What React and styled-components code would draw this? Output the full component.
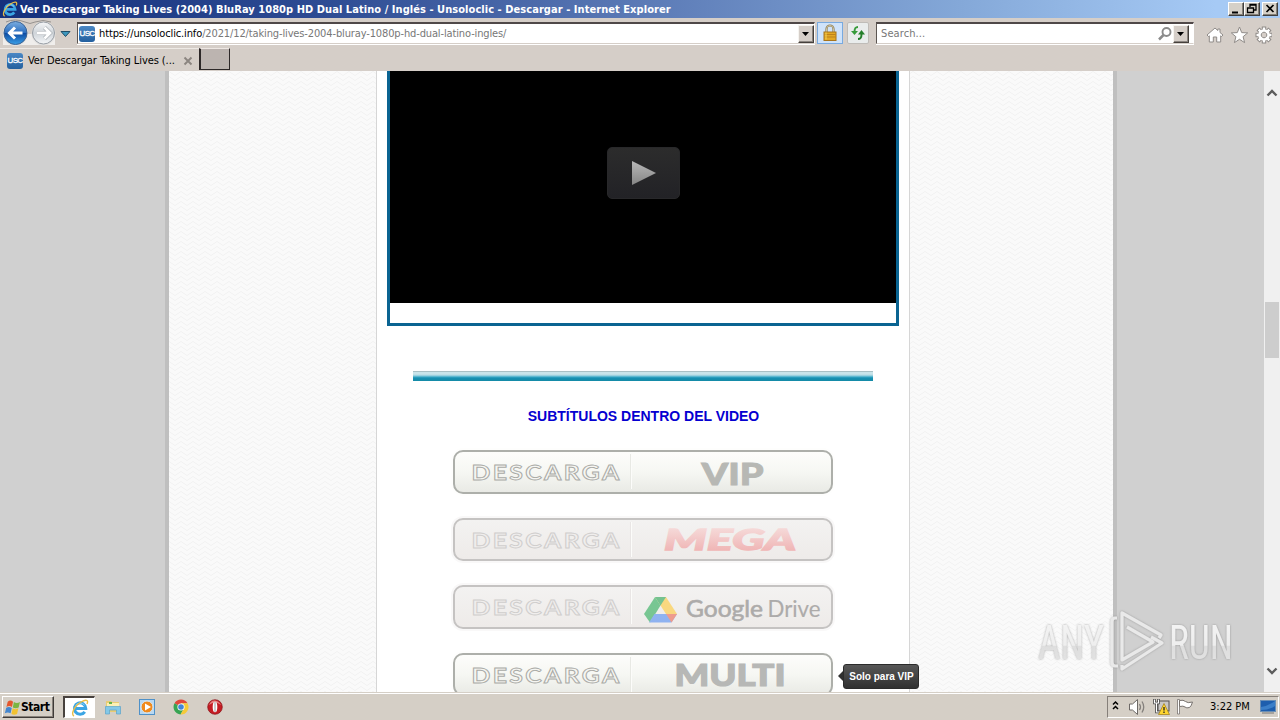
import React from "react";
import styled, { createGlobalStyle } from "styled-components";

const Global = createGlobalStyle`
  * { box-sizing: border-box; }
  body { margin: 0; overflow: hidden; }
`;

const ui = `"DejaVu Sans Condensed", "DejaVu Sans", sans-serif`;

const Screen = styled.div`
  position: relative;
  width: 1280px;
  height: 720px;
  display: flex;
  flex-direction: column;
  overflow: hidden;
  background: #d5cec8;
  font-family: ${ui};
  font-stretch: condensed;
  font-size: 11px;
  color: #000;
`;

const Text = styled.span`
  white-space: pre;
  line-height: 14px;
  font-weight: ${(p) => (p.$bold ? 700 : 400)};
  font-size: ${(p) => p.$size || 11}px;
  letter-spacing: ${(p) => p.$track || 0}px;
  color: ${(p) => p.$color || "inherit"};
`;

/* Title bar */
const TitleBar = styled.header`
  display: flex;
  align-items: center;
  height: 18px;
  flex: none;
  padding: 0 2px;
  gap: 2px;
  background: linear-gradient(90deg, #15307c 0%, #2d4b93 25%, #5b7ab6 50%, #84a8d8 75%, #a6caf5 95%);
`;
const TitleText = styled(Text)`
  flex: 1;
  padding-top: 1px;
`;
const Captions = styled.div`
  display: flex;
`;
const CaptionButton = styled.button`
  display: flex;
  width: 16px;
  height: 14px;
  padding: 0;
  margin-left: ${(p) => p.$gap || 0}px;
  background: #d5d0c8;
  border: 1px solid;
  border-color: #fff #404040 #404040 #fff;
  box-shadow: inset -1px -1px #858078;
`;

/* Navigation row */
const NavRow = styled.div`
  display: flex;
  align-items: center;
  height: 30px;
  flex: none;
  padding-left: 2px;
`;
const HistoryButtons = styled.div`
  display: flex;
  width: 75px;
  height: 30px;
`;
const Field = styled.div`
  display: flex;
  align-items: center;
  width: ${(p) => p.$w}px;
  height: 22px;
  margin-right: ${(p) => p.$gap}px;
  padding: 0 0 0 ${(p) => p.$pad}px;
  background: #fff;
  border-style: solid;
  border-width: 2px 1px 1px 1px;
  border-color: #4f4848 #fff #d5cec8 #5c5652;
  box-shadow: 0 1px #fff;
`;
const Address = styled(Text)`
  margin-left: 4px;
`;
const Favicon = styled.span`
  display: flex;
  align-items: center;
  justify-content: center;
  flex: none;
  width: 16px;
  height: 16px;
  border-radius: 3px;
  background: linear-gradient(#4a87c4, #24609f);
  color: #fff;
  font: 400 8px/16px "Liberation Sans", sans-serif;
  letter-spacing: -0.7px;
  -webkit-text-stroke: 0.3px #fff;
`;
const Grow = styled.div`
  flex: 1;
`;
const DropButton = styled.button`
  display: flex;
  align-items: center;
  justify-content: center;
  width: 16px;
  height: 18px;
  padding: 0;
  margin-right: ${(p) => p.$right || 0}px;
  background: #d5cec8;
  border: 1px solid;
  border-color: #f6f4f0 #45403c #45403c #f6f4f0;
  box-shadow: inset -1px -1px #8b8580;
`;
const ToolButton = styled.button`
  display: flex;
  align-items: center;
  justify-content: center;
  width: ${(p) => p.$w}px;
  height: 22px;
  padding: 0;
  margin-right: ${(p) => p.$gap}px;
  background: ${(p) => (p.$active ? "#cfe3fa" : "#e9ecec")};
  border: 1px solid ${(p) => (p.$active ? "#78aae0" : "#bfbcb8")};
  border-radius: ${(p) => (p.$active ? 0 : 2)}px;
`;
const IconGroup = styled.div`
  display: flex;
  gap: 6px;
  padding-top: 3px;
`;

/* Tabs */
const TabRow = styled.nav`
  display: flex;
  height: 23px;
  flex: none;
`;
const Tab = styled.div`
  display: flex;
  align-items: center;
  width: 199px;
  height: 23px;
  padding: 1px 0 0 7px;
  gap: 5px;
  border-top: 1px solid #eeeae6;
`;
const TabLabel = styled(Text)`
  width: 150px;
`;
const NewTab = styled.div`
  width: 31px;
  height: 22px;
  background: #bcb4b0;
  border: solid #2d2828;
  border-width: 1px 1px 1px 2px;
  border-top-color: #eee8e4;
`;

/* Page */
const Viewport = styled.main`
  display: flex;
  flex: 1;
  min-height: 0;
  overflow: hidden;
  background: #d0d0d0;
`;
const Canvas = styled.div`
  width: 1264px;
  display: flex;
  padding-left: 165px;
`;
const zig = encodeURIComponent(
  `<svg xmlns="http://www.w3.org/2000/svg" width="12" height="5"><path d="M0 .5L6 4.500L12 .5" fill="none" stroke="#f2f2f2" stroke-width="1"/></svg>`
);
const Sheet = styled.div`
  display: flex;
  width: 952px;
  padding-left: 207px;
  border: solid #bfbfbf;
  border-width: 0 4px;
  background: #fafafa url("data:image/svg+xml,${zig}");
`;
const Article = styled.article`
  width: 534px;
  height: 621px;
  display: flex;
  flex-direction: column;
  align-items: center;
  background: #fff;
  border: solid #d6d6d6;
  border-width: 0 1px;
`;
const Player = styled.section`
  width: 512px;
  height: 255px;
  flex: none;
  border: solid #0a6492;
  border-width: 0 3px 3px;
`;
const VideoStage = styled.div`
  display: flex;
  justify-content: center;
  height: 232px;
  padding: 76px 0 0 1px;
  background: #000;
`;
const PlayButton = styled.button`
  width: 73px;
  height: 52px;
  padding: 0;
  border: 1px solid #28282a;
  border-radius: 5px;
  background: linear-gradient(#2c2c2c, #222226);
`;
const Divider = styled.div`
  width: 460px;
  height: 10px;
  flex: none;
  margin-top: 45px;
  background: linear-gradient(#a9c0c5 0 1px, #c9e4ea 1px 3px, #b4dbe4 4px, #7fc6da 5px, #3aa9c6 6px, #1890b2 7px, #148aa6 10px);
`;
const Heading = styled.h2`
  margin: 26px 0 25px;
  padding-left: 1px;
  font: 700 14px/18px "Liberation Sans", Arial, sans-serif;
  color: #0500d0;
  white-space: nowrap;
`;
const Downloads = styled.div`
  display: flex;
  flex-direction: column;
  gap: 24px;
`;
const DownloadRow = styled.div`
  position: relative;
  height: 43.5px;
`;
const DownloadButton = styled.a`
  display: flex;
  width: 380px;
  height: 43.5px;
  border: 2px solid ${(p) => (p.$dim ? "#c5c3c2" : "#adafaa")};
  border-radius: 10px;
  background: ${(p) =>
    p.$dim ? "linear-gradient(#f3f2f1, #eeebe9)" : "linear-gradient(#fdfdfb, #f6f7f3 50%, #e9eae5)"};
  box-shadow: 0 0 0 2px ${(p) => (p.$dim ? "#f9f8f8" : "#fefefd")};
`;
const Tip = styled.div`
  position: absolute;
  left: 390px;
  top: 11px;
  width: 76px;
  height: 25px;
  padding-left: 1px;
  border-radius: 3px;
  background: linear-gradient(#575757, #303030);
  border: 1px solid #2b2b2b;
  color: #fff;
  font: 700 10px/23px "Liberation Sans", Arial, sans-serif;
  text-align: center;
  white-space: nowrap;
  &::before {
    content: "";
    position: absolute;
    left: -6px;
    top: 6px;
    border: solid transparent;
    border-width: 5px 5px 5px 0;
    border-right-color: #303030;
  }
`;
const ScrollBar = styled.aside`
  display: flex;
  flex-direction: column;
  align-items: center;
  justify-content: space-between;
  width: 16px;
  padding: 16px 0 15px;
  background: #f0f0f0;
`;
const Thumb = styled.div`
  width: 14px;
  height: 56px;
  margin-bottom: 104px;
  background: #cdcdcd;
`;

/* Taskbar */
const TaskBar = styled.footer`
  display: flex;
  align-items: center;
  height: 28px;
  flex: none;
  padding: 2px 1px 1px 2px;
  background: #d5cfc6;
  border-top: 1px solid #d5cfc6;
  box-shadow: inset 0 1px #fff;
`;
const StartButton = styled.button`
  display: flex;
  align-items: center;
  width: 52px;
  height: 22px;
  padding: 0 0 0 1px;
  font-family: ${ui};
  background: #d5cfc6;
  border: 1px solid;
  border-color: #fff #3f3b38 #3f3b38 #fff;
  box-shadow: inset -1px -1px #88827b;
`;
const Task = styled.div`
  display: flex;
  align-items: center;
  justify-content: center;
  width: ${(p) => (p.$active ? 32 : 34)}px;
  height: 22px;
  margin-left: ${(p) => (p.$active ? 9 : 0)}px;
  background: ${(p) => (p.$active ? "#fff" : "transparent")};
  border-style: solid;
  border-width: ${(p) => (p.$active ? "2px 1px 1px 2px" : "0 1px 1px 2px")};
  border-color: ${(p) => (p.$active ? "#48423e #fff #fff #48423e" : "transparent")};
`;
const Tray = styled.div`
  display: flex;
  align-items: center;
  width: 172px;
  height: 22px;
  margin-left: auto;
  padding-left: 3px;
  border: 1px solid;
  border-color: #857f79 #fff #fff #857f79;
`;
const Clock = styled(Text)`
  width: 40px;
  margin: 0 10px 0 15px;
`;
const Watermark = styled.svg`
  position: absolute;
  left: 1030px;
  top: 600px;
  pointer-events: none;
`;

const IE = ({ size }) => (
  <svg width={size} height={size} viewBox="0 0 18 18">
    <path d="M4 9.500H14.800A5.700 5.700 0 1 0 13.800 12.800" fill="none" stroke="#3ba5e4" strokeWidth="3" />
    <path d="M4.500 6.500A5.700 5.700 0 0 1 13.500 6" fill="none" stroke="#8bd2f6" strokeWidth="1" />
    <path d="M3 17C-.5 15.500 3 7 10 3 14.500.5 18 .5 16 5" fill="none" stroke="#e9bd45" strokeWidth="1.400" />
  </svg>
);

const Arrow = () => (
  <svg width="8" height="4" viewBox="0 0 8 4"><path d="M0 0h7L3.500 4z" fill="#000" /></svg>
);

const HistoryIcons = () => (
  <svg width="75" height="30" viewBox="2 18 75 30">
    <defs>
      <linearGradient id="back" x2="0" y2="1">
        <stop offset="0" stopColor="#7caee0" /><stop offset=".48" stopColor="#2d6fc0" />
        <stop offset=".52" stopColor="#0e4da4" /><stop offset="1" stopColor="#3ba0e8" />
      </linearGradient>
      <linearGradient id="fwd" x2="0" y2="1">
        <stop offset="0" stopColor="#f6f7f8" /><stop offset=".5" stopColor="#cfd4d9" /><stop offset="1" stopColor="#f4f6f8" />
      </linearGradient>
    </defs>
    <path d="M3 34h52v11H3z" fill="#f0eeec" />
    <path d="M6 22q9-4 19 0 5 3 10 0 8-3 16 0" fill="none" stroke="#96928f" />
    <circle cx="15.500" cy="33.500" r="12.500" fill="#e4e2e0" />
    <circle cx="43.500" cy="33.500" r="12" fill="#e4e2e0" />
    <circle cx="15.500" cy="33" r="11.500" fill="url(#back)" stroke="#3b6293" />
    <circle cx="43.500" cy="33" r="11" fill="url(#fwd)" stroke="#989ea5" />
    <path d="M22.500 33H10M15 27.500L9.500 33l5.500 5.500" fill="none" stroke="#fff" strokeWidth="3" />
    <path d="M37 33h12M44.500 27.500L50 33l-5.500 5.500" fill="none" stroke="#a4a9ae" strokeWidth="4" />
    <path d="M37 33h12M44.500 27.500L50 33l-5.500 5.500" fill="none" stroke="#fff" strokeWidth="2.800" />
    <path d="M61 31.500h9L65.500 36.500z" fill="#3d97bd" stroke="#204e68" />
  </svg>
);

const Lock = () => (
  <svg width="14" height="18" viewBox="0 0 14 18">
    <path d="M3.500 8V5a3.500 3.500 0 0 1 7 0v3" fill="none" stroke="#8d7d55" strokeWidth="2.200" />
    <path d="M3.500 8V5a3.500 3.500 0 0 1 7 0v3" fill="none" stroke="#dcd3b1" strokeWidth=".8" />
    <rect x="1" y="8" width="12" height="8.500" fill="#e3a823" stroke="#a8741b" />
    <path d="M1.500 10.500h11M1.500 13h11" stroke="#bd811a" />
    <path d="M3 8.500v7" stroke="#f5d257" />
  </svg>
);
const Refresh = () => (
  <svg width="16" height="16" viewBox="0 0 16 16">
    <path d="M8 2C5 2 4.500 3.500 4.500 7" fill="none" stroke="#369b3a" strokeWidth="2" />
    <path d="M1 6h7L4.500 10z" fill="#369b3a" />
    <path d="M8 14c3 0 3.500-1.500 3.500-5" fill="none" stroke="#247f2b" strokeWidth="2" />
    <path d="M8 9.500h7L11.500 5z" fill="#247f2b" />
  </svg>
);
const Magnifier = () => (
  <svg width="15" height="14" viewBox="0 0 15 14">
    <circle cx="8.500" cy="5" r="4" fill="none" stroke="#8b8b8b" strokeWidth="1.900" />
    <path d="M5.500 8L1 12.500" stroke="#8b8b8b" strokeWidth="2.500" />
  </svg>
);

const gearTeeth = Array.from({ length: 8 }, (_, i) => i * 45);
const BrowserIcons = () => (
  <IconGroup>
    <svg width="18" height="18" viewBox="0 0 18 18">
      <path d="M1 9l8-7 2.800 2.500V3H14v3.500L17 9l-1.500 1.500-.8-.7V16h-4v-5H7.300v5h-4V9.800l-.8.7z" fill="#fff" stroke="#8f8b88" />
    </svg>
    <svg width="18" height="18" viewBox="0 0 18 18">
      <path d="M9.500 1l2.200 5.600 6 .3-4.600 3.800 1.500 5.900-5.100-3.300-5.100 3.300 1.500-5.900L1.300 6.900l6-.3z" fill="#fff" stroke="#8f8b88" />
    </svg>
    <svg width="18" height="18" viewBox="0 0 18 18">
      <g transform="translate(1 0)">
        {gearTeeth.map((a) => (
          <rect key={a} x="7.300" y="1" width="3.400" height="4.500" fill="#fff" stroke="#8f8b88" transform={`rotate(${a} 9 9)`} />
        ))}
        <circle cx="9" cy="9" r="5.800" fill="#fff" />
        <path d="M9 6.200a2.800 2.800 0 1 0 .01 0" fill="#d5cec8" stroke="#8f8b88" />
      </g>
    </svg>
  </IconGroup>
);

const DriveLogo = () => (
  <g opacity=".62" transform="translate(189 8.500)">
    <path d="M11 1.500h11l11 17H22z" fill="#ffcb3d" />
    <path d="M11 1.500l5.500 8.500L6 27 0 18.500z" fill="#2fae5c" />
    <path d="M11 1.500h11l-5.500 8.500z" fill="#2aa757" />
    <path d="M10.500 18.500H33L27.500 27H5z" fill="#5590f5" />
    <path d="M22 18.500h11L27.500 27z" fill="#ee6b55" />
  </g>
);

const Brand = ({ kind }) => {
  const black = { fontFamily: "Lato, sans-serif", fontWeight: 900 };
  if (kind === "VIP")
    return <text x="246.500" y="32.500" fontSize="30" fill="#b7b8b4" stroke="#b7b8b4" strokeWidth=".9" textLength="62" lengthAdjust="spacingAndGlyphs" {...black}>VIP</text>;
  if (kind === "MULTI")
    return <text x="219.500" y="30.500" fontSize="30" fill="#b7b8b6" stroke="#b7b8b6" strokeWidth="1.200" textLength="111" lengthAdjust="spacingAndGlyphs" {...black}>MULTI</text>;
  if (kind === "MEGA")
    return (
      <text x="209" y="30" fontSize="28.500" fontStyle="italic" fill="url(#mega)" stroke="url(#mega)" strokeWidth="1.300" textLength="132" lengthAdjust="spacingAndGlyphs" {...black}>MEGA</text>
    );
  return (
    <>
      <DriveLogo />
      <g fill="#adabaa" stroke="#adabaa" fontFamily="Lato, sans-serif" fontSize="22.500">
        <text x="231" y="30" strokeWidth=".6" textLength="77" lengthAdjust="spacingAndGlyphs">Google</text>
        <text x="312.500" y="30" strokeWidth=".15" textLength="53" lengthAdjust="spacingAndGlyphs">Drive</text>
      </g>
    </>
  );
};

const Download = ({ kind, dim, tip }) => (
  <DownloadRow>
    <DownloadButton $dim={dim}>
      <svg width="376" height="39" viewBox="0 0 376 39">
        <defs>
          <linearGradient id="mega" x2="0" y2="1">
            <stop offset=".1" stopColor="#f6dedd" /><stop offset=".9" stopColor="#efb2b2" />
          </linearGradient>
        </defs>
        <text x="16.500" y="28" fontFamily="Lato, sans-serif" fontWeight="700" fontSize="21" fill={dim ? "#f0eeed" : "#f6f6f2"} stroke={dim ? "#cfcdcc" : "#a9aaa6"} strokeWidth=".9" letterSpacing="2" textLength="150" lengthAdjust="spacingAndGlyphs">DESCARGA</text>
        <path d="M175.500 2v35" stroke={dim ? "#e9e6e5" : "#e8e9e4"} />
        <path d="M176.500 2v35" stroke="#fcfcfa" />
        <Brand kind={kind} />
      </svg>
    </DownloadButton>
    {tip && <Tip>{tip}</Tip>}
  </DownloadRow>
);

const Chevron = ({ up }) => (
  <svg width="12" height="12" viewBox="0 0 12 12">
    <path d={up ? "M1.500 8.500L6 4l4.500 4.500" : "M1.500 3.500L6 8l4.500-4.500"} fill="none" stroke="#5c5c5c" strokeWidth="2.400" />
  </svg>
);

const StartFlag = () => (
  <svg width="17" height="17" viewBox="0 0 16 16">
    <path d="M3.500 2.500Q6 .5 8.500 2.500L7.500 7.500Q5 5.800 2.300 7.500z" fill="#e4572d" />
    <path d="M9.300 2.800Q12 4.500 15 2.800L13.800 8Q11 9.500 8.300 8z" fill="#7bb541" />
    <path d="M2.100 8.300Q4.700 6.800 7.300 8.500L6.200 13.500Q3.500 12 .8 13.500z" fill="#4386cf" />
    <path d="M8.100 8.800Q10.800 10.300 13.500 8.800L12.300 14Q9.500 15.500 7 14z" fill="#f1c232" />
  </svg>
);
const Explorer = () => (
  <svg width="18" height="18" viewBox="0 0 18 18">
    <path d="M2 3h5l1 1h7v10H2z" fill="#e9cc73" />
    <path d="M3 5h12v4H3z" fill="#fbf0b5" />
    <path d="M5 4h3v2H5z" fill="#63b34b" />
    <path d="M1.500 8.500h15V16h-4v-4h-7v4h-4z" fill="#83c8e8" stroke="#5ba5ca" strokeWidth=".7" />
  </svg>
);
const MediaPlayer = () => (
  <svg width="18" height="18" viewBox="0 0 18 18">
    <rect x="1.500" y="1.500" width="15" height="15" fill="#b8d8f2" stroke="#4f91c8" />
    <circle cx="9" cy="9" r="6" fill="#f08a1d" stroke="#d8e9f5" />
    <path d="M7 5.500v7L13 9z" fill="#fff" />
  </svg>
);
const ChromeIcon = () => (
  <svg width="16" height="16" viewBox="0 0 16 16">
    <path d="M8 8L1.500 4.300A7.500 7.500 0 0 1 14.500 4.300H8z" fill="#e0473a" />
    <path d="M8 8L1.500 4.300A7.500 7.500 0 0 0 7.500 15.500L11 9.500z" fill="#37a453" />
    <path d="M8 4.300h6.500A7.500 7.500 0 0 1 7.500 15.500L11 9.500z" fill="#f5ca38" />
    <circle cx="8" cy="8" r="3.600" fill="#fff" /><circle cx="8" cy="8" r="2.800" fill="#4285d8" />
  </svg>
);
const OperaIcon = () => (
  <svg width="16" height="16" viewBox="0 0 16 16">
    <circle cx="8" cy="8" r="7.300" fill="#c51d24" stroke="#8a1219" strokeWidth=".7" />
    <path d="M2 6Q8 1 14 6Q12 2 8 1.500T2 6" fill="#e58382" />
    <ellipse cx="8" cy="8" rx="2.300" ry="5.300" fill="#fff" /><path d="M8 3v10" stroke="#9b9b9b" />
  </svg>
);

const TrayIcons = () => (
  <svg width="84" height="20" viewBox="0 0 84 20">
    <path d="M2 7.500L4.500 5 7 7.500M2 12L4.500 9.500 7 12" fill="none" stroke="#000" strokeWidth="1.500" />
    <path d="M18.500 7h3l5-4.500v15l-5-4.500h-3z" fill="#fff" stroke="#6d6966" />
    <path d="M28.500 7q2 3 0 6M31 4.500q3.500 5.500 0 11" fill="none" stroke="#85817d" strokeWidth="1.300" />
    <rect x="47" y="4" width="11" height="10" fill="#c9c7c5" stroke="#55514e" />
    <path d="M43.500 2v4h4V2M45.500 6v9h4" fill="none" stroke="#444" strokeWidth="2.600" />
    <path d="M43.500 2.500V6h4V2.500M45.500 6v9h4" fill="none" stroke="#fff" strokeWidth="1.100" />
    <path d="M53 6.500l5.500 11h-11z" fill="#ffd631" stroke="#9d7c15" strokeWidth=".7" /><path d="M53 10v3.500M53 14.500v1.500" stroke="#222" strokeWidth="1.300" />
    <path d="M66.500 2.500h2V17h-2z" fill="#fff" stroke="#77726e" strokeWidth=".8" />
    <path d="M68.500 3.500q4-1 6 1t7 .5q-1 4-3 5.500-3 1-4.500-.5t-5.500-.5z" fill="#fff" stroke="#77726e" />
  </svg>
);
const ShowDesktop = () => (
  <svg width="16" height="14" viewBox="0 0 16 14">
    <rect x=".5" y=".5" width="15" height="11" fill="#1e5ead" stroke="#6b8fb6" />
    <path d="M1 7Q8 6 15 1v5Q9 10 1 10z" fill="#3c7fc8" />
    <path d="M2 13h12" stroke="#777" />
  </svg>
);

const Mark = () => (
  <Watermark width="230" height="80" viewBox="1030 600 230 80">
    <defs>
      <linearGradient id="wm" x2="0" y2="1">
        <stop offset="0" stopColor="#f5f5f5" /><stop offset=".55" stopColor="#eee" /><stop offset=".56" stopColor="#dedede" /><stop offset="1" stopColor="#e4e4e4" />
      </linearGradient>
      <filter id="soft" x="-20%" y="-20%" width="140%" height="140%">
        <feDropShadow dx="0" dy="0" stdDeviation="1.300" floodColor="#777" floodOpacity=".65" />
      </filter>
    </defs>
    <g filter="url(#soft)">
      <g fill="url(#wm)" fontFamily="Roboto, sans-serif" fontSize="49">
        <text x="1038" y="659" textLength="66" lengthAdjust="spacingAndGlyphs">ANY</text>
        <text x="1169" y="659" textLength="64" lengthAdjust="spacingAndGlyphs">RUN</text>
      </g>
      <g fill="none" stroke="#e9e9e9" strokeWidth="3.200" strokeLinejoin="round">
        <path d="M1117 618h-2q-3 0-3 4v40q0 4 3 4h3" />
        <path d="M1159 638l2-3-39-22v47l31-18-26-15" />
        <path d="M1151 637l11 6-40 26v-4" />
      </g>
    </g>
  </Watermark>
);

export default function App() {
  return (
    <Screen>
      <Global />
      <TitleBar>
        <IE size={16} />
        <TitleText $bold $track={0.055} $color="#fff">Ver Descargar Taking Lives (2004) BluRay 1080p HD Dual Latino / Inglés - Unsoloclic - Descargar - Internet Explorer</TitleText>
        <Captions>
          <CaptionButton><svg width="14" height="12"><path d="M3 9.500h6" stroke="#000" strokeWidth="2" /></svg></CaptionButton>
          <CaptionButton>
            <svg width="14" height="12"><path d="M5 4V1.500h6V7H9M5 2h6M2.500 5h6v4.500h-6zM2 5h7" fill="none" stroke="#000" strokeWidth="1.300" /></svg>
          </CaptionButton>
          <CaptionButton $gap={2}><svg width="14" height="12"><path d="M3.500 2l7 7M10.500 2l-7 7" stroke="#000" strokeWidth="1.700" /></svg></CaptionButton>
        </Captions>
      </TitleBar>
      <NavRow>
        <HistoryButtons><HistoryIcons /></HistoryButtons>
        <Field $w={738} $gap={2} $pad={1}>
          <Favicon>USC</Favicon>
          <Address $track={-0.13} $color="#777"><Text $track={-0.13} $color="#000">https://unsoloclic.info</Text>/2021/12/taking-lives-2004-bluray-1080p-hd-dual-latino-ingles/</Address>
          <Grow />
          <DropButton><Arrow /></DropButton>
        </Field>
        <ToolButton $w={26} $gap={4} $active><Lock /></ToolButton>
        <ToolButton $w={22} $gap={7}><Refresh /></ToolButton>
        <Field $w={318} $gap={12} $pad={4}>
          <Text $track={0.1} $color="#777">Search...</Text>
          <Grow />
          <Magnifier />
          <DropButton $right={4}><Arrow /></DropButton>
        </Field>
        <BrowserIcons />
      </NavRow>
      <TabRow>
        <Tab>
          <Favicon>USC</Favicon>
          <TabLabel $track={-0.08}>Ver Descargar Taking Lives (...</TabLabel>
          <svg width="10" height="10" viewBox="0 0 10 10"><path d="M1.500 1.500l7 7M8.500 1.500l-7 7" stroke="#8b8580" strokeWidth="1.900" /></svg>
        </Tab>
        <NewTab />
      </TabRow>
      <Viewport>
        <Canvas>
          <Sheet>
            <Article>
              <Player>
                <VideoStage>
                  <PlayButton>
                    <svg width="71" height="50" viewBox="0 0 71 50">
                      <defs><linearGradient id="tri" x2="0" y2="1"><stop stopColor="#b8b8b8" /><stop offset="1" stopColor="#858585" /></linearGradient></defs>
                      <path d="M24 13L48 25 24 37z" fill="url(#tri)" />
                    </svg>
                  </PlayButton>
                </VideoStage>
              </Player>
              <Divider />
              <Heading>SUBTÍTULOS DENTRO DEL VIDEO</Heading>
              <Downloads>
                <Download kind="VIP" />
                <Download kind="MEGA" dim />
                <Download kind="DRIVE" dim />
                <Download kind="MULTI" tip="Solo para VIP" />
              </Downloads>
            </Article>
          </Sheet>
        </Canvas>
        <ScrollBar><Chevron up /><Thumb /><Chevron /></ScrollBar>
      </Viewport>
      <TaskBar>
        <StartButton><StartFlag /><Text $bold $size={12} $track={-0.45}>Start</Text></StartButton>
        <Task $active><IE size={18} /></Task>
        <Task><Explorer /></Task>
        <Task><MediaPlayer /></Task>
        <Task><ChromeIcon /></Task>
        <Task><OperaIcon /></Task>
        <Tray><TrayIcons /><Clock>3:22 PM</Clock><ShowDesktop /></Tray>
      </TaskBar>
      <Mark />
    </Screen>
  );
}
